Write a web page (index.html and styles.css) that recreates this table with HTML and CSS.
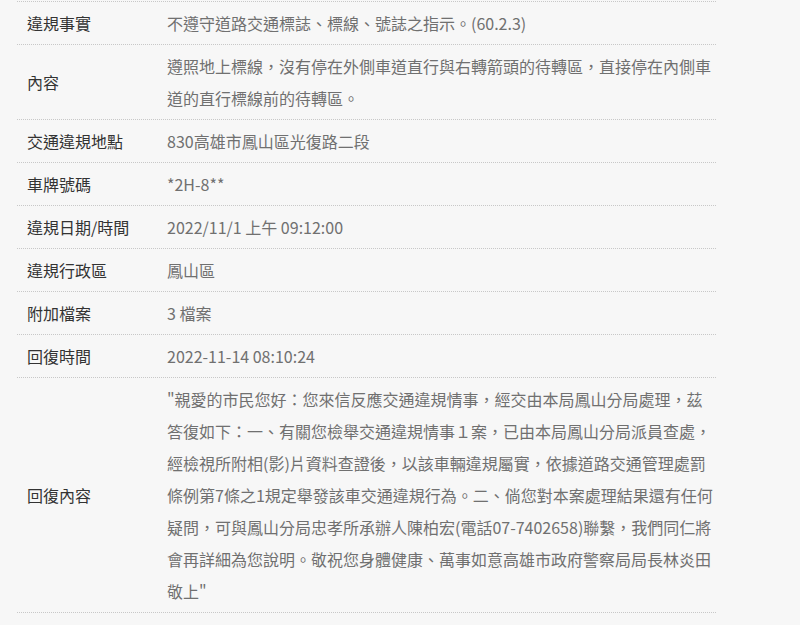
FILE: index.html
```html
<!DOCTYPE html>
<html lang="zh-Hant">
<head>
<meta charset="utf-8">
<link rel="stylesheet" href="styles.css">
</head>
<body>
<div class="detail">
  <div class="row"><div class="label">違規事實</div><div class="value">不遵守道路交通標誌、標線、號誌之指示。(60.2.3)</div></div>
  <div class="row"><div class="label">內容</div><div class="value">遵照地上標線，沒有停在外側車道直行與右轉箭頭的待轉區，直接停在內側車道的直行標線前的待轉區。</div></div>
  <div class="row"><div class="label">交通違規地點</div><div class="value">830高雄市鳳山區光復路二段</div></div>
  <div class="row"><div class="label">車牌號碼</div><div class="value">*2H-8**</div></div>
  <div class="row"><div class="label">違規日期/時間</div><div class="value">2022/11/1 上午 09:12:00</div></div>
  <div class="row"><div class="label">違規行政區</div><div class="value">鳳山區</div></div>
  <div class="row"><div class="label">附加檔案</div><div class="value">3 檔案</div></div>
  <div class="row"><div class="label">回復時間</div><div class="value">2022-11-14 08:10:24</div></div>
  <div class="row last"><div class="label">回復內容</div><div class="value">"親愛的市民您好：您來信反應交通違規情事，經交由本局鳳山分局處理，茲答復如下：一、有關您檢舉交通違規情事１案，已由本局鳳山分局派員查處，經檢視所附相(影)片資料查證後，以該車輛違規屬實，依據道路交通管理處罰條例第7條之1規定舉發該車交通違規行為。二、倘您對本案處理結果還有任何疑問，可與鳳山分局忠孝所承辦人陳柏宏(電話07-7402658)聯繫，我們同仁將會再詳細為您說明。敬祝您身體健康、萬事如意高雄市政府警察局局長林炎田敬上"</div></div>
</div>
</body>
</html>
```
FILE: styles.css
```css
html, body {
  margin: 0;
  padding: 0;
  background: #f7f7f7;
}
body {
  font-family: "Noto Sans CJK TC", "Noto Sans", sans-serif;
  font-size: 16px;
}
.detail {
  width: 699px;
  margin-left: 17px;
  padding-top: 1px;
}
.row {
  display: grid;
  grid-template-columns: 150px 1fr;
  border-top: 1px dotted #c8c8c8;
}
.row.last {
  border-bottom: 1px dotted #c8c8c8;
}
.label {
  padding: 5px 10px;
  line-height: 32px;
  color: #333;
  align-self: center;
}
.value {
  padding: 5px 0;
  line-height: 32px;
  color: #707070;
  word-break: break-all;
}
```
